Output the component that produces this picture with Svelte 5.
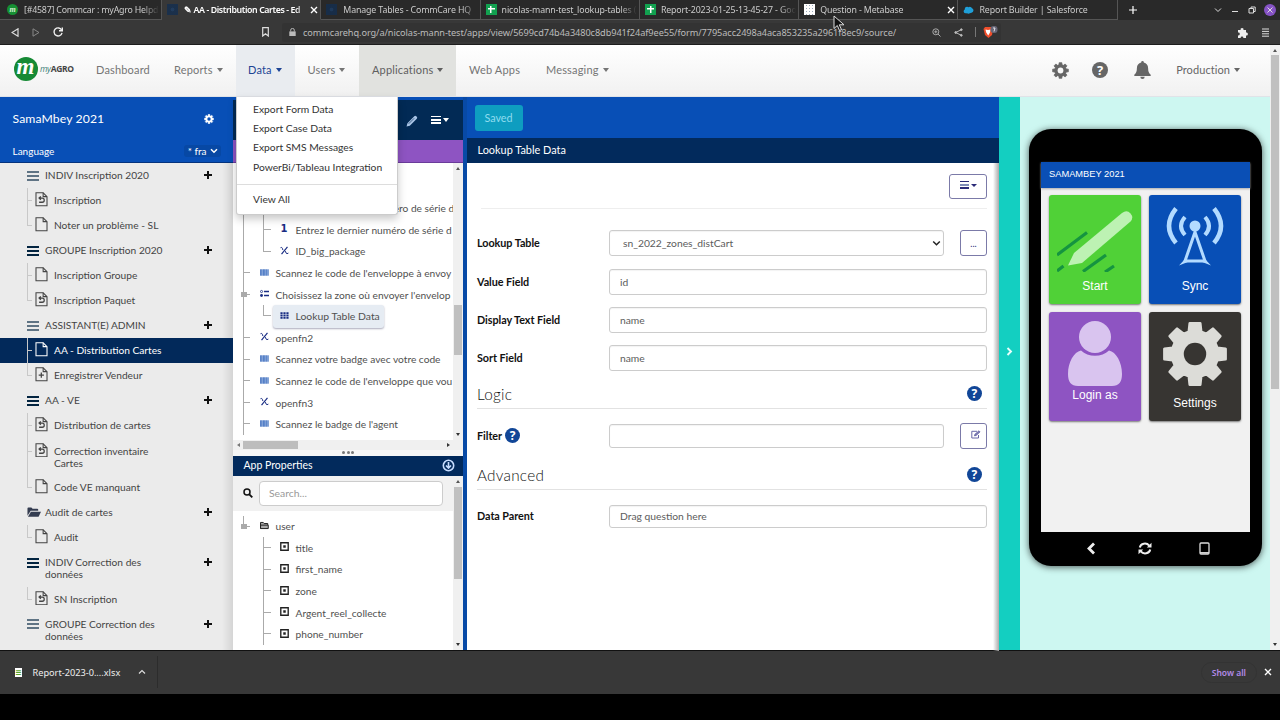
<script>
  const tabs = [
    { title: '[#4587] Commcar : myAgro Helpd', icon: 'agro' },
    { title: '✎ AA - Distribution Cartes - Ed', icon: 'hq', active: true, close: true },
    { title: 'Manage Tables - CommCare HQ', icon: 'hq' },
    { title: 'nicolas-mann-test_lookup-tables (', icon: 'sheet' },
    { title: 'Report-2023-01-25-13-45-27 - Goo', icon: 'sheet' },
    { title: 'Question - Metabase', icon: 'meta', close: true },
    { title: 'Report Builder | Salesforce', icon: 'cloud' }
  ];

  const exportLinks = ['Export Form Data', 'Export Case Data', 'Export SMS Messages', 'PowerBi/Tableau Integration'];

  const modules = [
    { name: 'INDIV Inscription 2020', icon: 'bars', soft: true, forms: [
      { name: 'Inscription', icon: 'update' },
      { name: 'Noter un problème - SL', icon: 'file' }
    ] },
    { name: 'GROUPE Inscription 2020', icon: 'bars', forms: [
      { name: 'Inscription Groupe', icon: 'file' },
      { name: 'Inscription Paquet', icon: 'update' }
    ] },
    { name: 'ASSISTANT(E) ADMIN', icon: 'bars', soft: true, forms: [
      { name: 'AA - Distribution Cartes', icon: 'file', selected: true },
      { name: 'Enregistrer Vendeur', icon: 'add' }
    ] },
    { name: 'AA - VE', icon: 'bars', forms: [
      { name: 'Distribution de cartes', icon: 'update' },
      { name: 'Correction inventaire Cartes', icon: 'update', tall: true },
      { name: 'Code VE manquant', icon: 'file' }
    ] },
    { name: 'Audit de cartes', icon: 'folder', forms: [{ name: 'Audit', icon: 'file' }] },
    { name: 'INDIV Correction des données', icon: 'bars', tall: true, forms: [
      { name: 'SN Inscription', icon: 'update' }
    ] },
    { name: 'GROUPE Correction des données', icon: 'bars', soft: true, tall: true, forms: [] }
  ];

  const questions = [
    { label: 'Entrez le premier numéro de série d', icon: 'one', depth: 1 },
    { label: 'Entrez le dernier numéro de série d', icon: 'one', depth: 1 },
    { label: 'ID_big_package', icon: 'calc', depth: 1, last: true },
    { label: "Scannez le code de l'enveloppe à envoy", icon: 'barcode', depth: 0 },
    { label: "Choisissez la zone où envoyer l'envelop", icon: 'list', depth: 0, open: true },
    { label: 'Lookup Table Data', icon: 'grid', depth: 1, last: true, selected: true },
    { label: 'openfn2', icon: 'calc', depth: 0 },
    { label: 'Scannez votre badge avec votre code', icon: 'barcode', depth: 0 },
    { label: "Scannez le code de l'enveloppe que vou", icon: 'barcode', depth: 0 },
    { label: 'openfn3', icon: 'calc', depth: 0 },
    { label: "Scannez le badge de l'agent", icon: 'barcode', depth: 0 }
  ];

  const userProps = ['title', 'first_name', 'zone', 'Argent_reel_collecte', 'phone_number'];

  const fields = [
    { label: 'Value Field', value: 'id' },
    { label: 'Display Text Field', value: 'name' },
    { label: 'Sort Field', value: 'name' }
  ];

  // outline of a cog centred on 0,0
  function cog(teeth, outer, inner, tip, base) {
    const pts = [];
    for (let i = 0; i < teeth; i++) {
      const a = (i * 2 * Math.PI) / teeth - Math.PI / 2;
      for (const [r, d] of [[inner, -base], [outer, -tip], [outer, tip], [inner, base]]) {
        pts.push((r * Math.cos(a + d)).toFixed(2) + ',' + (r * Math.sin(a + d)).toFixed(2));
      }
    }
    return pts.join(' ');
  }
</script>

{#snippet gear(cls)}
  <svg class={cls} viewBox="-50 -50 100 100">
    <polygon points={cog(8, 47, 35, 0.17, 0.27)} fill="currentColor" stroke="currentColor" stroke-width="4" stroke-linejoin="round" />
    <circle r="17" class="hole" />
  </svg>
{/snippet}

{#snippet caret()}<i class="caret"></i>{/snippet}

{#snippet plus()}
  <svg class="plus" viewBox="0 0 8 8"><path d="M4 0v8M0 4h8" stroke="currentColor" stroke-width="2" /></svg>
{/snippet}

{#snippet formIcon(kind)}
  <svg class="form-icon" viewBox="0 0 13 15" fill="none" stroke="currentColor" stroke-width="1.1">
    <path d="M.8.8h7.4l4 4v9.4H.8z" />
    <path d="M8.2.8v4h4" />
    {#if kind === 'update'}
      <path d="M4 6.300h3.300c2.700 0 2.700 4.300 0 4.300H4M5.800 4.600 4 6.300l1.800 1.700" stroke-width="1.300" />
    {:else if kind === 'add'}
      <path d="M6.3 5.6v5.4M3.6 8.3H9" stroke-width="1.3" />
    {/if}
  </svg>
{/snippet}

{#snippet questionIcon(kind)}
  <span class="q-icon">
    {#if kind === 'one'}
      <b>1</b>
    {:else if kind === 'calc'}
      <svg viewBox="0 0 10 9" fill="none" stroke="currentColor" stroke-width="1.1"><path d="M8.300.5 1.700 8.500" stroke-width="1.300" /><path d="M.6 1.400Q2 .400 2.600 2L3.200 4M6 5.200l.8 2.200Q7.500 8.700 9.300 7.400" /></svg>
    {:else if kind === 'barcode'}
      <svg viewBox="0 0 10 8"><path d="M.5.5v7M2 .5v7M3.8.5v7M5.3.5v7M7 .5v7M9 .5v7" stroke="#4a76bf" stroke-width="1" /><path d="M.5.5h9v7h-9z" fill="#3f72c4" opacity=".5" /></svg>
    {:else if kind === 'list'}
      <svg viewBox="0 0 10 8"><path d="M4.5 1.8H10M4.5 6.2H10" stroke="currentColor" stroke-width="1.7" /><circle cx="1.7" cy="1.8" r="1.2" fill="none" stroke="currentColor" stroke-width=".9" /><circle cx="1.7" cy="6.2" r="1.6" fill="currentColor" /></svg>
    {:else}
      <svg viewBox="0 0 10 8"><path d="M.5 1.3h9M.5 4h9M.5 6.7h9" stroke="currentColor" stroke-width="2" stroke-dasharray="2.4 .9" /></svg>
    {/if}
  </span>
{/snippet}

{#snippet help()}<span class="help">?</span>{/snippet}

<div class="window">
  <div class="tabs">
    {#each tabs as tab}
      <div class="tab" class:active={tab.active}>
        <span class="favicon {tab.icon}">
          {#if tab.icon === 'agro'}m{:else if tab.icon === 'cloud'}
            <svg width="11" viewBox="0 0 11 8"><path d="M2.7 7.3a2 2 0 0 1-.9-3.8A2.4 2.4 0 0 1 5.6 1.2 2.2 2.2 0 0 1 9 2.3a2.3 2.3 0 0 1-.5 4.400c-1.300.1-1.900 1-3 1-1.300 0-1.600-.4-2.800-.4z" fill="#1f9fd8" /></svg>
          {/if}
        </span>
        <span class="tab-title">{tab.title}</span>
        {#if tab.close}<svg class="x" viewBox="0 0 8 8"><path d="m1 1 6 6M7 1 1 7" /></svg>{/if}
      </div>
    {/each}
    <svg class="new-tab" viewBox="0 0 8 8"><path d="M4 0v8M0 4h8" stroke="#fff" stroke-width="1.2" /></svg>
    <div class="controls">
      <svg width="8" height="8" viewBox="0 0 8 8"><path d="m1 2.500 3 3 3-3" /></svg>
      <svg width="6" height="8" viewBox="0 0 6 8"><path d="M0 5.500h6" /></svg>
      <svg width="8" height="8" viewBox="0 0 8 8"><path d="M1 2.500h4.500V7H1zM3 2.500V1h4.200v4.500H5.500" /></svg>
      <span class="quit"><svg width="6" height="6" viewBox="0 0 6 6"><path d="m.5.5 5 5m0-5-5 5" /></svg></span>
    </div>
    <svg class="pointer" viewBox="0 0 12 17"><path d="M1 1v12.500l3.300-3L6.500 15.500l2-.9L6.300 9.800H11z" fill="#111" stroke="#ddd" /></svg>
  </div>

  <div class="toolbar">
    <svg width="8" height="9" viewBox="0 0 8 9" fill="none" stroke="#ddd"><path d="M7 .8v7.400L1 4.500z" stroke-width="1.200" /></svg>
    <svg class="forward" width="8" height="9" viewBox="0 0 8 9" fill="none" stroke="#888"><path d="M1 .8v7.400l6-3.700z" /></svg>
    <svg class="reload" width="10" height="10" viewBox="0 0 10 10" fill="none" stroke="#eee" stroke-width="1.400"><path d="M8.600 3A4 4 0 1 0 9 5.800" /><path d="M9.300.5v3.300H6" /></svg>
    <svg class="bookmark" width="7" height="10" viewBox="0 0 7 10" fill="none" stroke="#ddd" stroke-width="1.200"><path d="M.7.7h5.600v8.300L3.500 6.700.7 9z" /></svg>
    <div class="address">
      <svg width="7" height="8" viewBox="0 0 7 8"><path d="M.3 3.400h6.400V8H.3z" fill="#bbb" /><path d="M1.700 3.500V2.200a1.800 1.800 0 0 1 3.600 0v1.300" fill="none" stroke="#bbb" /></svg>
      <span class="url">commcarehq.org/a/nicolas-mann-test/apps/view/5699cd74b4a3480c8db941f24af9ee55/form/7795acc2498a4aca853235a2961f8ec9/source/</span>
      <svg width="9" height="9" viewBox="0 0 9 9" fill="none" stroke="#aaa"><circle cx="3.800" cy="3.800" r="3" /><path d="m6 6 2.500 2.500M2.300 3.800h3M3.800 2.300v3" /></svg>
      <svg class="share" width="9" height="9" viewBox="0 0 9 9" fill="#bbb" stroke="#bbb"><path d="M7.300 1.700 1.700 4.500l5.600 2.800" fill="none" /><circle cx="7.300" cy="1.700" r=".9" /><circle cx="1.700" cy="4.500" r=".9" /><circle cx="7.300" cy="7.300" r=".9" /></svg>
      <i class="bar"></i>
      <svg class="brave" width="15" height="12" viewBox="0 0 15 12"><path d="M2 1h6l2 2-1 6-3.500 3L2 9 .5 3z" fill="#f04e2b" /><path d="M2.500 3.500 5 4l2.500-.5L7 6.500 5.200 9.500 3.200 6.500z" fill="#fff" /><rect x="7.500" y="0" width="7" height="7" rx="3" fill="#667" /><path d="M10 2h2L11 5.500" stroke="#fff" stroke-width=".8" fill="none" /></svg>
    </div>
    <svg class="puzzle" width="11" height="11" viewBox="0 0 11 11" fill="#eee"><path d="M1 3h2.600a1.500 1.500 0 1 1 2.900 0H9v2.600a1.500 1.500 0 1 1 0 2.900V11H6.400a1.400 1.400 0 1 0-2.800 0H1V8.300a1.400 1.400 0 1 0 0-2.700z" /></svg>
    <svg class="burger" width="7" height="9" viewBox="0 0 7 9"><path d="M0 1h7M0 3.400h7M0 5.800h7M0 8.200h7" stroke="#ddd" stroke-width="1" /></svg>
  </div>

  <div class="viewport">
    <div class="page">
      <nav>
        <div class="brand">
          <span class="brand-mark">m</span><span class="brand-name"><em>my</em>AGRO</span>
        </div>
        <a class="dashboard">Dashboard</a>
        <a class="reports">Reports {@render caret()}</a>
        <div class="data open">
          Data {@render caret()}
          <div class="dropdown">
            {#each exportLinks as link}<span>{link}</span>{/each}
            <hr />
            <span>View All</span>
          </div>
        </div>
        <a class="users">Users {@render caret()}</a>
        <a class="apps">Applications {@render caret()}</a>
        <a class="web">Web Apps</a>
        <a class="messaging">Messaging {@render caret()}</a>
        <div class="nav-right">
          {@render gear('nav-gear')}
          <span class="nav-help">?</span>
          <svg class="bell" viewBox="0 0 17 18" fill="currentColor"><path d="M8.500 0a1.300 1.300 0 0 1 1.300 1.400c2.700.6 4.300 2.700 4.300 5.600 0 3.500.7 5.200 2.600 6.700v1.200H.3v-1.200C2.200 12.200 2.900 10.500 2.900 7c0-2.900 1.600-5 4.300-5.600A1.300 1.300 0 0 1 8.500 0zM6.300 15.700h4.400a2.200 2.200 0 0 1-4.400 0z" /></svg>
          <a>Production {@render caret()}</a>
        </div>
      </nav>

      <main>
        <aside>
          <div class="app-head">
            <div class="app-name">SamaMbey 2021 {@render gear('app-gear')}</div>
            <div class="language">
              Language
              <span class="lang">* fra <svg width="8" height="6" viewBox="0 0 8 6"><path d="m1 1.200 3 3 3-3" fill="none" stroke="#fff" stroke-width="1.500" /></svg></span>
            </div>
          </div>
          {#each modules as mod}
            <div class="module" class:tall={mod.tall}>
              {#if mod.icon === 'folder'}
                <svg class="folder" viewBox="0 0 15 11"><path d="M.5 9.500V1.500q0-1 1-1h3.200l1.300 1.300h5q1 0 1 1V4H4z" fill="#343c50" /><path d="M4.200 5H15l-2.600 5.500H1z" fill="#343c50" /></svg>
              {:else}
                <i class="bars" class:soft={mod.soft}></i>
              {/if}
              <span>{mod.name}</span>
              {@render plus()}
            </div>
            {#each mod.forms as form, i}
              <div class="form" class:tall={form.tall} class:selected={form.selected} class:last={i === mod.forms.length - 1}>
                <i class="branch"></i>
                {@render formIcon(form.icon)}
                <span>{form.name}</span>
              </div>
            {/each}
          {/each}
        </aside>

        <section class="tree-pane">
          <div class="tree-head">
            <svg class="pencil" viewBox="0 0 11 11"><path d="M.5 10.500 1.300 7.500 7.600 1.200q.9-.9 1.800 0l.5.5q.8.800 0 1.700L3.500 9.800z" fill="#a9c4e6" /><path d="m2.500 8 5-5" stroke="#022a55" stroke-width=".6" /></svg>
            <i class="bars white"></i>{@render caret()}
          </div>
          <div class="purple"></div>
          <div class="tree-scroll">
            <div class="tree">
              {#each questions as q}
                <div class="node" class:nested={q.depth} class:last={q.last} class:opened={q.open}>
                  <i class="line"></i>
                  {#if q.depth}<i class="line sub"></i>{/if}
                  <span class="node-label" class:picked={q.selected}>{@render questionIcon(q.icon)}{q.label}</span>
                </div>
              {/each}
            </div>
            <div class="vbar"><i class="up"></i><i class="thumb"></i><i class="down"></i></div>
          </div>
          <div class="hbar"><i class="left"></i><i class="hthumb"></i><i class="right"></i></div>
          <div class="splitter"><i></i><i></i><i></i></div>
          <div class="props-head">
            App Properties
            <svg width="13" height="13" viewBox="0 0 13 13" fill="none" stroke="#c6dcff" stroke-width="1.600"><circle cx="6.500" cy="6.500" r="5.200" /><path d="M6.500 3v5.500M4 6.500 6.500 9 9 6.500" /></svg>
          </div>
          <div class="props">
            <div class="props-main">
              <div class="search">
                <svg width="10" height="10" viewBox="0 0 10 10" fill="none" stroke="#111"><circle cx="4" cy="4" r="3" stroke-width="1.500" /><path d="m6.300 6.300 3 3" stroke-width="1.900" /></svg>
                <input placeholder="Search..." />
              </div>
              <div class="node root opened">
                <i class="line"></i>
                <span class="node-label">
                  <span class="q-icon dark"><svg viewBox="0 0 10 8"><path d="M.6 7.400V.6h3l1 1.200h4v1.700M.6 7.400V3.600h8.600v3.800z" fill="#aaa" stroke="#222" stroke-width="1.100" /></svg></span>user
                </span>
              </div>
              {#each userProps as prop}
                <div class="node nested prop">
                  <i class="line sub"></i>
                  <span class="node-label"><span class="q-icon dark"><svg viewBox="0 0 8 8"><path d="M.7.700h6.600v6.600H.7z" fill="none" stroke="#222" stroke-width="1.200" /><path d="M2.900 2.900h2.200v2.200H2.900z" fill="#222" /></svg></span>{prop}</span>
                </div>
              {/each}
            </div>
            <div class="vbar second"><i class="up"></i><i class="thumb"></i><i class="down"></i></div>
          </div>
        </section>

        <section class="editor">
          <div class="save-bar"><button class="saved">Saved</button></div>
          <div class="editor-title">Lookup Table Data</div>
          <div class="editor-body">
            <div class="actions"><button class="outline menu"><i class="bars"></i>{@render caret()}</button></div>
            <div class="fields">
              <div class="field">
                <span class="name">Lookup Table</span>
                <div class="input select">sn_2022_zones_distCart <svg width="9" height="7" viewBox="0 0 9 7"><path d="m1.200 1.500 3.300 3.300 3.300-3.300" fill="none" stroke="#222" stroke-width="1.500" /></svg></div>
                <button class="outline side">...</button>
              </div>
              {#each fields as field}
                <div class="field"><span class="name">{field.label}</span><div class="input">{field.value}</div></div>
              {/each}
            </div>
            <div class="heading">Logic {@render help()}</div>
            <div class="field filter">
              <span class="name">Filter {@render help()}</span>
              <div class="input low"></div>
              <button class="outline side edit"><svg width="10" height="9" viewBox="0 0 10 9" fill="none" stroke="#6a69a8"><path d="M7.500 5v3H.8V1.300H6" /><path d="M3.500 5.800 4 4.300 8 .800l1 1-4 3.700z" fill="#8584bb" /></svg></button>
            </div>
            <div class="heading">Advanced {@render help()}</div>
            <div class="field parent"><span class="name">Data Parent</span><div class="input low">Drag question here</div></div>
          </div>
        </section>

        <div class="toggle"><svg width="7" height="9" viewBox="0 0 7 9"><path d="m1.500 1 3.500 3.500L1.500 8" fill="none" stroke="#e8fffc" stroke-width="1.900" /></svg></div>

        <section class="preview">
          <div class="phone">
            <div class="screen">
              <div class="screen-title">SAMAMBEY 2021</div>
              <div class="tiles">
                <div class="tile start">
                  <svg width="76" height="61" viewBox="0 0 76 61">
                    <g stroke="#159440" stroke-width="3.200"><path d="M0 44 30 21.500M26 60.500l23-16.500M0 60l6.500-5M48 61l9-6" /></g>
                    <path d="M17 42 65 2q5-3.500 8.500.5 3.500 4 0 8L25 52l-14 2.500z" fill="#bdf2b3" />
                  </svg>
                  <span>Start</span>
                </div>
                <div class="tile sync">
                  <svg width="60" height="61" viewBox="0 0 60 61" fill="none" stroke="#b3dbff">
                    <circle cx="30" cy="21" r="5.500" fill="#b3dbff" stroke="none" />
                    <path d="M20 12Q12 21 20 30M40 12Q48 21 40 30" stroke-width="4" />
                    <path d="M11 3.500Q-3 21 11 38M49 3.500Q63 21 49 38" stroke-width="4.500" />
                    <path d="M30 27 20 56h20z" stroke-width="3" />
                    <path d="M20 54l-6 6.500 10-4M40 54l6 6.500-10-4" fill="#b3dbff" stroke="none" />
                  </svg>
                  <span>Sync</span>
                </div>
                <div class="tile login">
                  <svg width="54" height="65" viewBox="0 0 54 65" fill="#d9c4ef"><circle cx="27" cy="16" r="16" /><path d="M13 29.500c7 7 21 7 28 0C48 31 54 41 54 53c0 8-3 12-10 12H10C3 65 0 61 0 53c0-12 6-22 13-23.500z" /></svg>
                  <span>Login as</span>
                </div>
                <div class="tile settings">
                  {@render gear('big-gear')}
                  <span>Settings</span>
                </div>
              </div>
            </div>
            <div class="keys">
              <svg width="10" height="13" viewBox="0 0 10 13"><path d="M8 1.500 3 6.500l5 5" fill="none" stroke="#eee" stroke-width="2.800" /></svg>
              <svg class="refresh" width="14" height="13" viewBox="0 0 14 13" fill="none" stroke="#eee" stroke-width="2"><path d="M1.800 5.500C2.500 1.200 8.500.2 11.200 3.600M12.200 7.500c-.7 4.300-6.700 5.300-9.400 1.900" /><path d="M13.500.8v4.700H8.800zM.5 12.200V7.500h4.700z" fill="#eee" stroke="none" /></svg>
              <svg width="11" height="13" viewBox="0 0 11 13"><rect x="1" y="1" width="9" height="11" rx="1" fill="none" stroke="#ddd" stroke-width="1.300" /><path d="M1 10.800h9" stroke="#ddd" stroke-width="1.500" /></svg>
            </div>
          </div>
        </section>
      </main>
    </div>
    <div class="vbar outer"><i class="up"></i><i class="thumb"></i><i class="down"></i></div>
  </div>

  <footer>
    <div class="download">
      <span class="xls">≡</span>
      <span>Report-2023-0....xlsx</span>
      <svg width="8" height="6" viewBox="0 0 8 6"><path d="m1 4.500 3-3 3 3" fill="none" stroke="#ddd" stroke-width="1.200" /></svg>
    </div>
    <span class="show-all">Show all</span>
    <svg class="x" viewBox="0 0 8 8"><path d="m1 1 6 6M7 1 1 7" /></svg>
  </footer>
</div>

<style>
  :global(body) {
    background: #000;
    overflow: hidden;
  }
  .window {
    width: 1280px;
    height: 720px;
    overflow: hidden;
    display: flex;
    flex-direction: column;
    font-family: Lato, "Liberation Sans", sans-serif;
    font-size: 10.3px;
    color: #444;
    white-space: nowrap;
  }
  .window :global(*) {
    box-sizing: border-box;
  }
  svg {
    flex: none;
    display: block;
  }
  i {
    flex: none;
  }

  /* browser chrome */
  .tabs {
    position: relative;
    height: 20px;
    flex: none;
    display: flex;
    align-items: center;
    background: #292929;
    color: #ccc;
    font: 8.8px "Noto Sans", sans-serif;
    letter-spacing: -0.13px;
  }
  .tab {
    width: 159.3px;
    height: 20px;
    display: flex;
    align-items: center;
    padding: 0 2px 0 5px;
    border-right: 1px solid #555;
    border-bottom: 1px solid #555;
  }
  .tab:first-child {
    width: 162px;
    padding-left: 7px;
    letter-spacing: -0.2px;
  }
  .tab.active {
    background: #383838;
    border-bottom-color: #383838;
    color: #fff;
    font-weight: 600;
    letter-spacing: -0.4px;
  }
  .tab-title {
    flex: 1;
    overflow: hidden;
    mask-image: linear-gradient(90deg, #000 88%, transparent);
  }
  .favicon {
    width: 11px;
    height: 11px;
    margin-right: 5px;
    flex: none;
    display: flex;
    align-items: center;
    justify-content: center;
  }
  .tab:first-child .favicon {
    margin-right: 6px;
  }
  .favicon.agro {
    border-radius: 50%;
    background: #169033;
    font: italic bold 8px "Liberation Serif", serif;
    color: #d5f0d5;
  }
  .favicon.hq {
    background: radial-gradient(circle at 50% 50%, #1c3d66 25%, #132e50 26%);
    opacity: 0.8;
    margin-right: 6px;
  }
  .favicon.sheet {
    background: linear-gradient(#fff, #fff) 50% 40% / 7px 1.5px no-repeat, linear-gradient(#fff, #fff) 50% 50% / 1.5px 7px no-repeat, #12a150;
  }
  .favicon.meta {
    background: radial-gradient(#9ab 20%, transparent 45%) 1px 3px / 3px 3px, #fff;
  }
  .x {
    width: 8px;
    height: 8px;
    stroke: #fff;
    stroke-width: 1.4;
  }
  .new-tab {
    width: 8px;
    margin-left: 11px;
  }
  .controls {
    margin-left: auto;
    display: flex;
    align-items: center;
    gap: 10px;
    padding-right: 4px;
    fill: none;
    stroke: #ddd;
  }
  .quit {
    width: 12px;
    height: 12px;
    margin-left: -2px;
    border-radius: 50%;
    background: #8552c4;
    display: flex;
    align-items: center;
    justify-content: center;
  }
  .pointer {
    position: absolute;
    left: 833px;
    top: 15px;
    width: 12px;
    z-index: 5;
  }
  .toolbar {
    height: 25px;
    flex: none;
    display: flex;
    align-items: center;
    padding: 0 11px;
    background: #383838;
    border-bottom: 1px solid #1d1d1d;
  }
  .forward {
    margin-left: 13px;
  }
  .reload {
    margin-left: 13px;
  }
  .bookmark {
    margin-left: 199px;
  }
  .address {
    width: 719px;
    height: 19px;
    margin-left: 13px;
    padding: 0 2px 0 7px;
    display: flex;
    align-items: center;
    border-radius: 3px;
    background: #333;
  }
  .url {
    width: 629px;
    margin-left: 7px;
    color: #bbb;
    font: 9.2px "Noto Sans", sans-serif;
    letter-spacing: -0.08px;
  }
  .share {
    margin-left: 13px;
  }
  .bar {
    width: 1px;
    height: 10px;
    background: #777;
    margin: 0 7px 0 12px;
  }
  .puzzle {
    margin-left: auto;
  }
  .burger {
    margin-left: 14px;
  }

  /* page */
  .viewport {
    height: 605px;
    flex: none;
    display: flex;
  }
  .page {
    width: 1270px;
    display: flex;
    flex-direction: column;
  }
  nav {
    height: 51.5px;
    flex: none;
    display: flex;
    align-items: stretch;
    background: linear-gradient(#fff, #f1f1f1);
    border-bottom: 1px solid #e0e3e8;
    font-size: 11px;
    color: #757575;
    letter-spacing: 0.17px;
  }
  nav a,
  nav .data {
    display: flex;
    align-items: center;
    padding-bottom: 1px;
  }
  .caret {
    display: inline-block;
    border: 3.5px solid transparent;
    border-top: 4px solid currentColor;
    border-bottom: 0;
    margin-left: 4px;
  }
  .brand {
    width: 96px;
    padding: 0 0 3px 14px;
    display: flex;
    align-items: center;
  }
  .brand-mark {
    width: 24px;
    height: 24px;
    border-radius: 50%;
    background: #168a35;
    color: #fff;
    font: italic bold 23px/19px "Liberation Serif", serif;
    text-indent: -1px;
    text-align: center;
    letter-spacing: 0;
  }
  .brand-name {
    margin-left: 2px;
    color: #444;
    font: bold 8.500px "Open Sans", sans-serif;
    letter-spacing: -0.35px;
  }
  .brand-name em {
    color: #3c7f78;
    font-weight: normal;
  }
  .dashboard {
    width: 78px;
  }
  .reports {
    width: 62px;
  }
  nav .data {
    position: relative;
    width: 59px;
    padding-left: 12px;
    background: #e9ecf0;
    color: #1d4494;
  }
  .users {
    width: 64px;
    padding-left: 12.500px;
  }
  .apps {
    width: 97px;
    padding-left: 13px;
    background: #e1e2df;
    color: #5f5f5f;
  }
  .web {
    padding-left: 13px;
    width: 90px;
  }
  .nav-right {
    margin-left: auto;
    padding-right: 30px;
    display: flex;
    align-items: center;
    color: #666;
  }
  .nav-right a {
    letter-spacing: 0.08px;
  }
  svg .hole {
    fill: #f8f8f8;
  }
  :global(.nav-gear) {
    width: 17px;
    height: 17px;
  }
  .nav-help {
    width: 16px;
    height: 16px;
    margin: 0 26px 0 23.500px;
    border-radius: 50%;
    background: #666;
    color: #fff;
    font: bold 13px/16px "Open Sans", sans-serif;
    text-align: center;
  }
  .bell {
    width: 17px;
    margin-right: 25px;
  }
  .dropdown {
    position: absolute;
    left: 0;
    top: 51.500px;
    z-index: 10;
    width: 162px;
    height: 118.500px;
    padding: 3px 0;
    background: #fff;
    border: 1px solid #ccc;
    border-top: 0;
    border-radius: 0 0 3px 3px;
    box-shadow: 0 4px 8px rgba(0, 0, 0, 0.22);
    color: #333;
    font-size: 10.3px;
    letter-spacing: 0;
  }
  .dropdown span {
    display: block;
    height: 19.4px;
    padding-left: 16px;
    line-height: 19.4px;
  }
  .dropdown hr {
    margin: 6.500px 0 5.500px;
    border: 0;
    border-top: 1px solid #ddd;
  }

  main {
    flex: 1;
    min-height: 0;
    display: flex;
  }
  aside {
    width: 233px;
    flex: none;
    overflow: hidden;
    background: linear-gradient(90deg, #ebebeb 222px, #d5d5d5);
    font-size: 10.2px;
  }
  .app-head {
    height: 66.500px;
    background: #084fb6;
    border-bottom: 1px solid #04337d;
    color: #fff;
    padding: 0 12.500px;
  }
  .app-name {
    height: 44px;
    padding: 0 7px 0 0;
    display: flex;
    align-items: center;
    justify-content: space-between;
    font-size: 12.2px;
    letter-spacing: 0.12px;
  }
  :global(.app-gear) {
    width: 10px;
    height: 10px;
  }
  :global(.app-gear) .hole {
    fill: #084fb6;
  }
  .language {
    height: 20px;
    display: flex;
    align-items: center;
    justify-content: space-between;
    font-size: 10px;
  }
  .lang {
    display: flex;
    align-items: center;
    gap: 3px;
    padding: 0 3px 0 4px;
    border-radius: 3px;
    background: #0748a4;
  }
  .module,
  .form {
    position: relative;
    height: 25.05px;
    display: flex;
    align-items: flex-start;
    line-height: 12px;
    padding: 6px 0 0 27px;
  }
  .module.tall,
  .form.tall {
    height: 36.5px;
  }
  .module span {
    margin-left: 6px;
    width: 163px;
  }
  .tall span {
    padding-right: 45px;
    white-space: normal;
  }
  .form.tall span {
    width: 110px;
    padding-right: 0;
  }
  .bars {
    display: inline-block;
    width: 12px;
    height: 10px;
    margin-top: 1.500px;
    background: linear-gradient(#022440 2px, transparent 2px 4px, #022440 4px 6px, transparent 6px 8px, #022440 8px);
  }
  .bars.soft {
    opacity: 0.6;
  }
  .folder {
    width: 14px;
    margin: 1px -2px 0 0;
  }
  .plus {
    width: 8px;
    height: 8px;
    margin-top: 2px;
    margin-left: -4px;
    color: #111;
  }
  .form {
    padding-left: 35px;
  }
  .form span {
    margin-left: 6px;
  }
  .form-icon {
    width: 13px;
    height: 14.500px;
    margin-top: -2px;
    color: #444;
  }
  /* connector between a module and its forms */
  .branch {
    position: absolute;
    left: 27px;
    top: 0;
    width: 5px;
    height: 100%;
    border-left: 1px solid #c8c8c8;
    background: linear-gradient(#c8c8c8, #c8c8c8) 0 12px / 5px 1px no-repeat;
  }
  .form.last .branch {
    height: 13px;
  }
  .form.selected {
    background: #02295a;
    color: #fff;
  }
  .selected .form-icon {
    color: #fff;
  }

  /* question tree */
  .tree-pane {
    width: 230px;
    flex: none;
    overflow: hidden;
    display: flex;
    flex-direction: column;
    border-top: 3px solid #084fb6;
    background: #fff;
  }
  .tree-head {
    height: 40px;
    flex: none;
    display: flex;
    align-items: center;
    padding: 0 14px 0 173px;
    background: #022a55;
    color: #fff;
  }
  .pencil {
    width: 12px;
    margin: 2px 12px 0 0;
  }
  .tree-head .bars {
    width: 10px;
    height: 8px;
    margin: 0 -2px 0 1px;
    background: linear-gradient(#fff 1.5px, transparent 1.5px 3px, #fff 3px 5px, transparent 5px 6.5px, #fff 6.5px);
  }
  .tree-head .caret {
    margin-left: 4px;
  }
  .purple {
    height: 23.500px;
    flex: none;
    background: #8e54c2;
    border-bottom: 1px solid #6a3b9a;
  }
  .tree-scroll {
    height: 276.500px;
    flex: none;
    display: flex;
  }
  .tree {
    width: 220px;
    padding-top: 34.500px;
    overflow: hidden;
  }
  .node {
    position: relative;
    height: 21.6px;
    display: flex;
    align-items: center;
    padding-left: 26.500px;
    color: #505050;
    font-size: 10.2px;
  }
  .node.nested {
    padding-left: 46.500px;
  }
  .line {
    position: absolute;
    left: 9.500px;
    top: 0;
    width: 7px;
    height: 100%;
    border-left: 1.500px solid #aaa;
    background: linear-gradient(#aaa, #aaa) 0 10px / 7px 1px no-repeat;
  }
  .nested .line:not(.sub) {
    background: none;
  }
  .line.sub {
    left: 29.500px;
    width: 8px;
  }
  .last .line.sub {
    height: 11px;
  }
  .opened::after {
    content: '';
    position: absolute;
    left: 8px;
    top: 8px;
    width: 6px;
    height: 5px;
    background: #aaa;
  }
  .root .line {
    height: 11px;
  }
  .node-label {
    display: flex;
    align-items: center;
  }
  .picked {
    height: 23px;
    margin-left: -7px;
    padding: 0 4px 0 7px;
    border-radius: 3px;
    background: #e6ecf3;
    box-shadow: 0 1px 2px #aab;
    font-size: 10.4px;
  }
  .q-icon {
    width: 16px;
    display: flex;
    align-items: center;
    color: #182c83;
    margin-bottom: 2px;
  }
  .q-icon svg {
    width: 9px;
    height: 9px;
  }
  .q-icon b {
    width: 9px;
    text-align: center;
    font: bold 10px "DejaVu Sans", sans-serif;
  }
  .vbar {
    position: relative;
    width: 10px;
    flex: none;
    display: flex;
    flex-direction: column;
    background: #f0f0f0;
  }
  .vbar .up,
  .vbar .down {
    margin: 4px auto;
    border: 2.500px solid transparent;
    border-top: 0;
    border-bottom: 3px solid #555;
  }
  .vbar .down {
    margin-top: auto;
    border-bottom: 0;
    border-top: 3px solid #333;
  }
  .thumb {
    margin: 131px 1px 0;
    height: 50px;
    background: #c0c0c0;
  }
  .hbar {
    height: 10px;
    flex: none;
    display: flex;
    align-items: center;
    background: #f0f0f0;
  }
  .hbar .left,
  .hbar .right {
    margin: 0 4px;
    border: 2px solid transparent;
    border-left: 0;
    border-right: 3px solid #777;
  }
  .hbar .left {
    margin-right: 3px;
  }
  .hbar .right {
    margin: 0 13px 0 auto;
    border-right: 0;
    border-left: 3px solid #333;
  }
  .hthumb {
    width: 55px;
    height: 8px;
    background: #bdbdbd;
  }
  .splitter {
    height: 6px;
    flex: none;
    display: flex;
    align-items: center;
    justify-content: center;
    gap: 1.500px;
    background: #f6f6f6;
  }
  .splitter i {
    width: 3px;
    height: 3px;
    border-radius: 50%;
    background: #777;
  }
  .props-head {
    height: 20.500px;
    flex: none;
    padding: 0 8px 1px 10.500px;
    display: flex;
    align-items: center;
    justify-content: space-between;
    background: #022a5c;
    color: #fff;
    font-size: 10.5px;
  }
  .props {
    flex: 1;
    min-height: 0;
    display: flex;
  }
  .props-main {
    width: 220px;
    overflow: hidden;
  }
  .search {
    height: 34.500px;
    padding: 0 10px;
    margin-bottom: 5px;
    display: flex;
    align-items: center;
    gap: 6px;
    background: #f1f1f1;
  }
  .search input {
    width: 184px;
    height: 25px;
    padding: 0 9px;
    border: 1px solid #ccc;
    border-radius: 4px;
    background: #fff;
    font: 10.400px Lato, sans-serif;
  }
  .search input::placeholder {
    color: #999;
  }
  .second .thumb {
    margin: 0 1px;
    height: 92px;
  }
  .outer .thumb {
    margin: -1px 1px 0;
    height: 334px;
  }

  /* question editor */
  .editor {
    position: relative;
    width: 536px;
    flex: none;
    border-left: 4px solid #084aa6;
    background: #fff;
  }
  .save-bar {
    height: 41px;
    padding: 8px 7.500px;
    background: #084fb6;
  }
  .saved {
    width: 48px;
    height: 26px;
    border: 0;
    border-radius: 3px;
    background: #0e9dc0;
    color: #8fdcef;
    font: 10.8px Lato, sans-serif;
    padding: 0 0 1px;
  }
  .editor-title {
    height: 25.500px;
    padding-left: 10.500px;
    line-height: 24.500px;
    background: #022a5c;
    color: #fff;
    font-size: 10.9px;
  }
  .editor-body {
    height: 487.500px;
    padding: 0 12px 0 10px;
    background: linear-gradient(90deg, transparent 526px, #aaa);
    color: #111;
  }
  .actions {
    height: 46px;
    margin-left: 4px;
    display: flex;
    justify-content: flex-end;
    padding-top: 10.500px;
    border-bottom: 1px solid #eee;
  }
  .outline {
    display: flex;
    align-items: center;
    justify-content: center;
    height: 25.500px;
    padding: 0;
    border: 1px solid #7b7aa8;
    border-radius: 3px;
    background: #fff;
    color: #2b2b78;
    font: 9px Lato, sans-serif;
  }
  .menu {
    width: 38px;
    align-items: center;
    padding-bottom: 2px;
  }
  .menu .bars {
    width: 9px;
    height: 8px;
    margin: 0;
    background: linear-gradient(#2b2b78 1.5px, transparent 1.5px 3px, #7f8db8 3px 5px, transparent 5px 6.5px, #2b2b78 6.5px);
  }
  .menu .caret {
    margin-left: 2px;
    border-width: 3px 3px 0;
  }
  .side {
    width: 27px;
    margin-left: auto;
  }
  .edit {
    padding: 0 0 2px 4px;
  }
  .fields {
    padding-top: 15px;
  }
  .field {
    height: 38.4px;
    display: flex;
    align-items: center;
  }
  .name {
    width: 132px;
    padding-bottom: 1px;
    display: flex;
    align-items: center;
    gap: 3px;
    font-size: 10.8px;
    font-weight: 700;
    letter-spacing: -0.05px;
  }
  .input {
    flex: 1;
    height: 26px;
    padding: 0 10px;
    display: flex;
    align-items: center;
    border: 1px solid #ccc;
    border-radius: 3px;
    background: #fff;
    color: #5c5c5c;
    box-shadow: inset 0 1px 1px rgba(0, 0, 0, 0.05);
  }
  .select {
    padding: 0 2px 0 13px;
    justify-content: space-between;
  }
  .select,
  .filter .input {
    flex: none;
    width: 334.500px;
  }
  .low {
    height: 23.500px;
  }
  .heading {
    height: 31.500px;
    display: flex;
    align-items: center;
    justify-content: space-between;
    padding: 2px 5px 0 0;
    border-bottom: 1px solid #e2e2e2;
    font-size: 15.3px;
    font-weight: 300;
    letter-spacing: 0.25px;
  }
  .help {
    width: 15px;
    height: 15px;
    border-radius: 50%;
    background: #114697;
    color: #fff;
    font: bold 12px/15px "Open Sans", sans-serif;
    text-align: center;
  }
  .filter {
    height: 49.500px;
    padding-top: 4px;
  }
  .parent {
    height: 52.500px;
  }
  .toggle {
    width: 21px;
    flex: none;
    padding: 0 0 43px 7px;
    display: flex;
    align-items: center;
    background: #13cfc1;
  }

  /* app preview */
  .preview {
    flex: 1;
    padding: 32px 8px 0 9px;
    background: #cdf7f1;
  }
  .phone {
    width: 233px;
    height: 437px;
    padding: 33.500px 12px 0 11.500px;
    border-radius: 22px;
    background: #000;
    box-shadow: 0 1px 7px rgba(0, 0, 0, 0.65);
  }
  .screen {
    height: 370px;
    background: #f1f1f1;
  }
  .screen-title {
    height: 25.500px;
    padding-left: 8.500px;
    background: #0a4fb5;
    color: #fff;
    font: 9.300px/24px "Liberation Sans", sans-serif;
    box-shadow: 0 1px 2px #aaa;
  }
  .tiles {
    padding: 7.500px 8.500px;
    display: grid;
    grid-template-columns: 92px 92px;
    grid-auto-rows: 109px;
    gap: 8px;
  }
  .tile {
    display: flex;
    flex-direction: column;
    align-items: center;
    border-radius: 3px;
    box-shadow: 0 1px 2px rgba(0, 0, 0, 0.5);
    color: #fff;
    font: 12px/14px "Liberation Sans", sans-serif;
  }
  .start {
    padding-top: 16px;
    background: #50d137;
  }
  .start span {
    margin-top: 7px;
  }
  .sync {
    padding-top: 10px;
    background: #084fb6;
  }
  .sync span {
    margin-top: 13px;
  }
  .login {
    padding-top: 9px;
    background: #8e54c2;
  }
  .login span {
    margin-top: 2px;
  }
  .settings {
    padding-top: 9px;
    background: #373532;
  }
  .settings span {
    margin-top: 9px;
  }
  :global(.big-gear) {
    width: 66px;
    height: 66px;
    color: #dcdcd8;
  }
  :global(.big-gear) .hole {
    fill: #373532;
  }
  .keys {
    display: flex;
    align-items: center;
    padding: 9.500px 0 0 45px;
  }
  .refresh {
    margin: 0 47px 0 42.500px;
  }

  footer {
    height: 43.500px;
    flex: none;
    display: flex;
    align-items: center;
    padding-right: 8px;
    border-top: 1px solid #111;
    background: #383838;
    color: #eee;
    font: 9.200px "Noto Sans", sans-serif;
  }
  .download {
    width: 158px;
    height: 32px;
    padding: 0 11px 0 15px;
    display: flex;
    align-items: center;
    border-right: 1px solid #2c2c2c;
  }
  .download svg {
    margin-left: auto;
  }
  .xls {
    width: 7px;
    height: 9px;
    margin-right: 10.500px;
    background: #fff;
    color: #59a52c;
    font: bold 8px/9px "DejaVu Sans", sans-serif;
  }
  .show-all {
    margin: 0 7px 0 auto;
    padding: 4px 10px;
    border: 1px solid #333;
    border-radius: 12px;
    color: #b18ae6;
    font-weight: 600;
    font-size: 8.500px;
  }
</style>
